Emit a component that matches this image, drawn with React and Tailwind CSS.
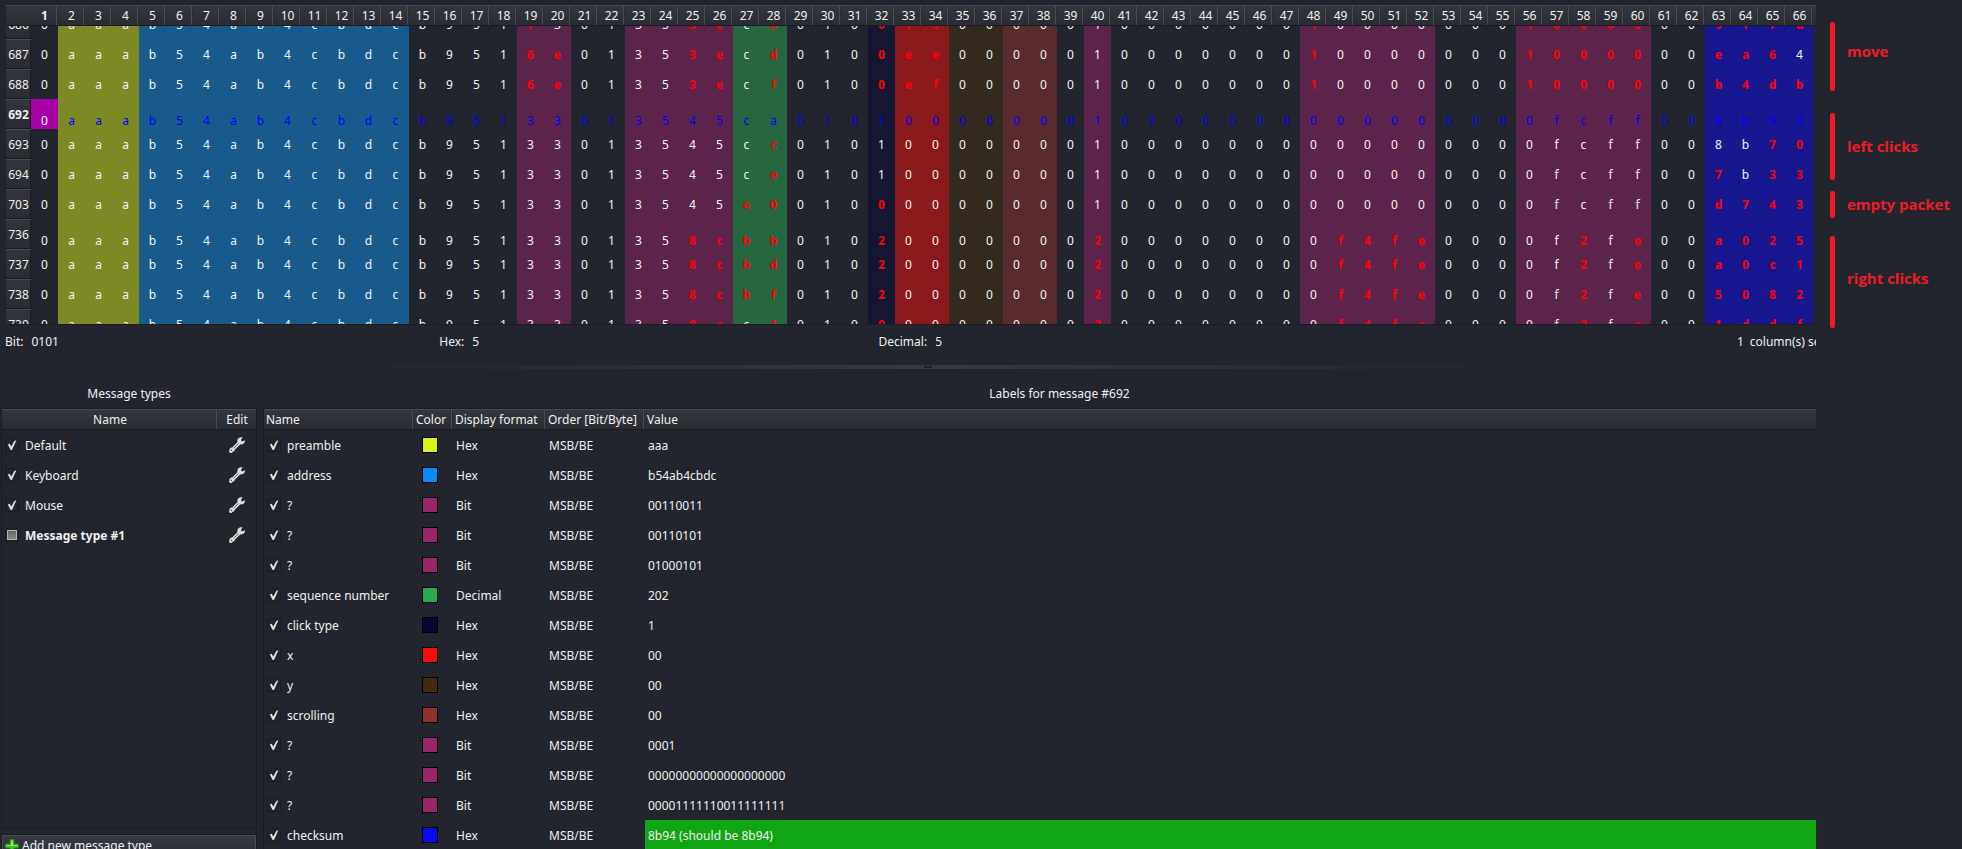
import { useLayoutEffect, useRef } from "react";

/* Label ranges over the message columns: [first, last, cell background]. */
const RANGES = [
  [2, 4, "bg-[#7d8925]"],
  [5, 14, "bg-[#195a8d]"],
  [19, 20, "bg-[#5c244b]"],
  [23, 26, "bg-[#5c244b]"],
  [27, 28, "bg-[#266740]"],
  [32, 32, "bg-[#151732]"],
  [33, 34, "bg-[#8a191c]"],
  [35, 36, "bg-[#33291f]"],
  [37, 38, "bg-[#5a2b2e]"],
  [40, 40, "bg-[#5c244b]"],
  [48, 52, "bg-[#5c244b]"],
  [56, 60, "bg-[#5c244b]"],
  [63, 66, "bg-[#171890]"],
];

const COLUMNS = Array.from({ length: 66 }, (_, i) => i + 1);

const message = (type, counter, seq, click, x, press, mid, tail, checksum) =>
  `0aaab54ab4cbdcb951${type}0135${counter}${seq}010${click}${x}00000${press}0000000${mid}000${tail}00${checksum}`;

const MESSAGES = [
  { id: 686, data: message("73", "3e", "cb", "0", "f3", "1", "10000", "10000", "9f7d") },
  { id: 687, data: message("6e", "3e", "cd", "0", "ee", "1", "10000", "10000", "ea64") },
  { id: 688, data: message("6e", "3e", "cf", "0", "ef", "1", "10000", "10000", "b4db") },
  { id: 692, data: message("33", "45", "ca", "1", "00", "1", "00000", "0fcff", "8b94"), gap: true },
  { id: 693, data: message("33", "45", "cc", "1", "00", "1", "00000", "0fcff", "8b70") },
  { id: 694, data: message("33", "45", "ce", "1", "00", "1", "00000", "0fcff", "7b33") },
  { id: 703, data: message("33", "45", "e0", "0", "00", "1", "00000", "0fcff", "d743") },
  { id: 736, data: message("33", "8c", "bb", "2", "00", "2", "0f4fe", "0f2fe", "a025"), gap: true },
  { id: 737, data: message("33", "8c", "bd", "2", "00", "2", "0f4fe", "0f2fe", "a0c1") },
  { id: 738, data: message("33", "8c", "bf", "2", "00", "2", "0f4fe", "0f2fe", "5082") },
  { id: 739, data: message("33", "8c", "c1", "0", "00", "2", "0f4fe", "0f2fe", "1ddf") },
];

const REFERENCE = MESSAGES.find((m) => m.id === 692);

const TYPES = [
  { name: "Default", state: "on" },
  { name: "Keyboard", state: "on" },
  { name: "Mouse", state: "on" },
  { name: "Message type #1", state: "partial" },
];

const LABELS = [
  ["preamble", "bg-[#d9f218]", "Hex", "aaa"],
  ["address", "bg-[#0d8cf7]", "Hex", "b54ab4cbdc"],
  ["?", "bg-[#9a256c]", "Bit", "00110011"],
  ["?", "bg-[#9a256c]", "Bit", "00110101"],
  ["?", "bg-[#9a256c]", "Bit", "01000101"],
  ["sequence number", "bg-[#28aa50]", "Decimal", "202"],
  ["click type", "bg-[#070733]", "Hex", "1"],
  ["x", "bg-[#f90c0c]", "Hex", "00"],
  ["y", "bg-[#422a0e]", "Hex", "00"],
  ["scrolling", "bg-[#933131]", "Hex", "00"],
  ["?", "bg-[#9a256c]", "Bit", "0001"],
  ["?", "bg-[#9a256c]", "Bit", "00000000000000000000"],
  ["?", "bg-[#9a256c]", "Bit", "00001111110011111111"],
  ["checksum", "bg-[#0a0af5]", "Hex", "8b94 (should be 8b94)", true],
];

const NOTES = [
  { text: "move", bar: "h-[69px]", pad: "pb-3" },
  { text: "left clicks", bar: "h-[67px] mt-[22px]", pad: "pb-[2px]" },
  { text: "empty packet", bar: "h-[27px] mt-[11px]", pad: "pb-[2px]" },
  { text: "right clicks", bar: "h-[92px] mt-[18px]", pad: "pb-2" },
];

const HEAD = "h-[21px] px-0 pb-0 pt-px font-normal leading-5 bg-linear-to-b from-[#34363e] to-[#2a2c33]";
const HEAD_LAST = "shadow-[inset_0_1px_#484a52,inset_0_-1px_#191b21]";
const HEAD_SEP = "shadow-[inset_0_1px_#484a52,inset_0_-1px_#191b21,inset_-1px_0_#2b2d34,inset_-2px_0_#4b4d55]";
const CELL = "h-[30px] px-0 pb-0 pt-[2px]";

function columnBackground(column) {
  const range = RANGES.find(([first, last]) => column >= first && column <= last);
  return range ? range[2] : "";
}

function cellStyle(msg, column) {
  if (msg === REFERENCE) {
    return column === 1 ? "bg-[#a600a6] text-white" : `${columnBackground(column)} text-[#0000ff]`;
  }
  const differs = msg.data[column - 1] !== REFERENCE.data[column - 1];
  return `${columnBackground(column)} ${differs ? "font-bold text-[#ff0000]" : "text-[#f4f4f4]"}`;
}

function MessageColumns() {
  return (
    <colgroup>
      <col className="w-[25px]" />
      {COLUMNS.map((c) => (
        <col key={c} className="w-[27px]" />
      ))}
      <col />
    </colgroup>
  );
}

function MessageTable() {
  const viewport = useRef(null);
  useLayoutEffect(() => {
    viewport.current.scrollTop = 17;
  }, []);

  return (
    <div className="ml-[6px] mt-[5px]">
      <table className="w-full table-fixed border-separate border-spacing-0 text-center">
        <MessageColumns />
        <thead>
          <tr>
            <td className={`${HEAD} ${HEAD_LAST}`} />
            {COLUMNS.map((c) => (
              <th key={c} scope="col" className={`${HEAD} ${HEAD_SEP}`}>
                <span className={c === 1 ? "font-bold" : ""}>{c}</span>
              </th>
            ))}
            <td className={`${HEAD} ${HEAD_LAST}`} />
          </tr>
        </thead>
      </table>
      <div ref={viewport} className="h-[298px] overflow-hidden">
        <table className="w-full table-fixed border-separate border-spacing-0 text-center">
          <MessageColumns />
          <tbody>
            {MESSAGES.map((msg) => (
              <tr key={msg.id}>
                <th
                  scope="row"
                  className={`${CELL} bg-linear-to-b from-[#33353d] to-[#2a2c33] leading-4 shadow-[inset_0_1px_#484a52,inset_0_-1px_#191b21,inset_-1px_0_#191b21] ${
                    msg === REFERENCE ? "font-bold" : "font-normal"
                  }`}
                >
                  {msg.id}
                </th>
                {COLUMNS.map((c) => (
                  <td
                    key={c}
                    className={`h-[30px] px-0 pb-0 leading-4 ${msg.gap ? "pt-[14px]" : "pt-[2px]"} ${cellStyle(msg, c)}`}
                  >
                    {msg.data[c - 1]}
                  </td>
                ))}
                <td />
              </tr>
            ))}
          </tbody>
        </table>
      </div>
      <div className="h-px bg-[#1b1d23]" />
    </div>
  );
}

function Tick({ id, state = "on" }) {
  return (
    <span className="relative block size-[14px] shrink-0">
      <input
        id={id}
        type="checkbox"
        defaultChecked={state === "on"}
        ref={(el) => {
          if (el) el.indeterminate = state === "partial";
        }}
        className="peer block size-[14px] appearance-none border border-[#1b1d24] bg-[#22242c]"
      />
      <svg
        viewBox="0 0 14 14"
        className="pointer-events-none absolute inset-0 hidden size-[14px] peer-checked:block"
        aria-hidden="true"
      >
        <path d="M2.800 6.400 4.600 5.800 6.300 8.600 9.300 3 11.400 2.200 7 12 5.600 12Z" fill="#dcdddd" />
      </svg>
      <span className="pointer-events-none absolute left-[2px] top-[2px] hidden size-[10px] border border-[#b0b0b0] bg-linear-to-b from-[#666] to-[#888] peer-indeterminate:block" />
    </span>
  );
}

function Wrench() {
  return (
    <svg viewBox="0 0 16 16" className="size-4" aria-hidden="true">
      <path
        d="M9.200 1.600C10.500.3 12.300 0 13.600.5L11.900 3.100 13 4.500 15.900 3.300C16.200 5.500 14.700 7.400 12.500 7.400L11.400 7.300 5.800 12.700C5.700 13.700 4.900 14.400 4.100 14.600L2.500 15.900C1.300 16.300 0 15.400.1 14L.5 12.400C.9 11.100 2 10.500 3.200 10.500L8.500 5C8.100 3.700 8.400 2.300 9.200 1.600Z"
        fill="#dededb"
      />
      <path d="M4.600 11.500 9.600 6.400" stroke="#66675f" strokeWidth="1" />
      <path d="M1.800 13.900 2.900 12.800" stroke="#4a4b47" strokeWidth="1.200" />
    </svg>
  );
}

function Plus() {
  return (
    <svg viewBox="0 0 14 14" className="size-[14px] shrink-0" aria-hidden="true">
      <path d="M5 .5h4V5h4.5v4H9v4.500H5V9H.5V5H5z" fill="#3fc124" stroke="#1f8a17" />
      <path d="M6 1.500h2V6h4.500v1H1.500V6H6z" fill="#8de866" />
    </svg>
  );
}

function StatusBar() {
  return (
    <div className="grid h-[33px] grid-cols-[434fr_439fr_858fr_119fr] items-center whitespace-nowrap pl-[5px]">
      <span className="flex gap-2">
        <span>Bit:</span>
        <span>0101</span>
      </span>
      <span className="flex gap-2">
        <span>Hex:</span>
        <span>5</span>
      </span>
      <span className="flex gap-2">
        <span>Decimal:</span>
        <span>5</span>
      </span>
      <span className="flex gap-[6px]">
        <span>1</span>
        <span>column(s) selected</span>
      </span>
    </div>
  );
}

function Splitter() {
  return (
    <div className="mt-[7px] flex h-1 items-center justify-center gap-px bg-linear-to-r from-[#22252e] from-18% via-[#353846] to-[#22252e] to-82%">
      <span className="size-[2px] bg-[#14161b]" />
      <span className="size-[2px] bg-[#14161b]" />
      <span className="size-[2px] bg-[#14161b]" />
    </div>
  );
}

function MessageTypes() {
  return (
    <section className="ml-px w-64 shrink-0">
      <h2 className="pb-[6px] leading-4">Message types</h2>
      <div className="h-[420px] border border-[#1a1c22]">
        <table className="w-full table-fixed border-separate border-spacing-0">
          <colgroup>
            <col />
            <col className="w-[38px]" />
          </colgroup>
          <thead>
            <tr>
              <th scope="col" className={`${HEAD} ${HEAD_SEP}`}>Name</th>
              <th scope="col" className={`${HEAD} ${HEAD_LAST}`}>Edit</th>
            </tr>
          </thead>
          <tbody>
            {TYPES.map((type, i) => (
              <tr key={type.name}>
                <td className="h-[30px] p-0">
                  <div className="flex items-center gap-[6px] pl-[3px]">
                    <Tick id={`type-${i}`} state={type.state} />
                    <label
                      htmlFor={`type-${i}`}
                      className={`pt-px ${type.state === "partial" ? "font-bold" : ""}`}
                    >
                      {type.name}
                    </label>
                  </div>
                </td>
                <td className="h-[30px] p-0">
                  <button type="button" aria-label={`Edit ${type.name}`} className="mx-auto block">
                    <Wrench />
                  </button>
                </td>
              </tr>
            ))}
          </tbody>
        </table>
      </div>
      <button
        type="button"
        className="mt-[6px] flex h-6 w-full items-center gap-[3px] rounded-xs border border-[#1a1c22] bg-linear-to-b from-[#373a44] to-[#2a2c33] pl-[3px] shadow-[inset_0_0_0_1px_#484a52]"
      >
        <Plus />
        Add new message type
      </button>
    </section>
  );
}

function Labels() {
  return (
    <section className="ml-[6px] min-w-0 flex-1">
      <h2 className="pb-[6px] leading-4">Labels for message #692</h2>
      <div className="border border-[#1a1c22]">
        <table className="w-full table-fixed border-separate border-spacing-0 whitespace-nowrap text-left">
          <colgroup>
            <col className="w-[150px]" />
            <col className="w-[39px]" />
            <col className="w-[93px]" />
            <col className="w-[99px]" />
            <col />
          </colgroup>
          <thead>
            <tr>
              {["Name", "Color", "Display format", "Order [Bit/Byte]"].map((title) => (
                <th key={title} scope="col" className={`${HEAD} ${HEAD_SEP}`}>
                  <span className="pl-[2px]">{title}</span>
                </th>
              ))}
              <th scope="col" className={`${HEAD} ${HEAD_LAST}`}>
                <span className="pl-[2px]">Value</span>
              </th>
            </tr>
          </thead>
          <tbody>
            {LABELS.map(([name, color, format, value, valid], i) => (
              <tr key={i}>
                <td className="h-[30px] p-0">
                  <div className="flex items-center gap-[6px] pl-[3px]">
                    <Tick id={`label-${i}`} />
                    <label htmlFor={`label-${i}`} className="pt-px">
                      {name}
                    </label>
                  </div>
                </td>
                <td className="h-[30px] p-0">
                  <span className={`ml-2 block size-4 border border-black ${color}`} />
                </td>
                <td className={CELL}>
                  <span className="pl-[3px]">{format}</span>
                </td>
                <td className={CELL}>
                  <span className="pl-[3px]">MSB/BE</span>
                </td>
                <td className={`${CELL} ${valid ? "bg-[#10a513]" : ""}`}>
                  <span className="pl-[3px]">{value}</span>
                </td>
              </tr>
            ))}
          </tbody>
        </table>
      </div>
    </section>
  );
}

function Notes() {
  return (
    <aside className="w-[146px] shrink-0 pl-[14px] pt-[22px] font-['Open_Sans','Noto_Sans',sans-serif] text-[15px] font-bold leading-5 text-[#ed1c24]">
      {NOTES.map((note) => (
        <div key={note.text} className={`flex gap-3 ${note.bar}`}>
          <span className="w-[5px] shrink-0 rounded-xs bg-[#ed1c24]" />
          <span className={`flex items-center whitespace-nowrap ${note.pad}`}>{note.text}</span>
        </div>
      ))}
    </aside>
  );
}

export default function App() {
  return (
    <div className="flex h-screen overflow-hidden bg-[#22252e] font-['Noto_Sans',sans-serif] text-xs text-[#f0f0f0]">
      <main className="min-w-0 flex-1 overflow-hidden">
        <div className="w-[calc(100%+40px)]">
          <MessageTable />
          <StatusBar />
          <Splitter />
          <div className="mt-[17px] flex text-center">
            <MessageTypes />
            <Labels />
          </div>
        </div>
      </main>
      <Notes />
    </div>
  );
}
